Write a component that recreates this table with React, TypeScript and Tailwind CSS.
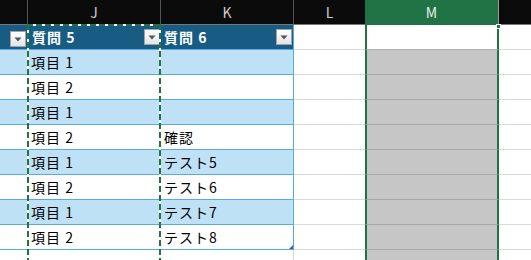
import React from 'react';

const GRID = 'grid grid-cols-[28px_133px_133px_71px_134px_1fr]';

interface Row {
  j: string;
  k: string;
}

const rows: Row[] = [
  { j: '項目 1', k: '' },
  { j: '項目 2', k: '' },
  { j: '項目 1', k: '' },
  { j: '項目 2', k: '確認' },
  { j: '項目 1', k: 'テスト5' },
  { j: '項目 2', k: 'テスト6' },
  { j: '項目 1', k: 'テスト7' },
  { j: '項目 2', k: 'テスト8' },
];

const FilterButton: React.FC = () => (
  <div className="flex h-4 w-4 shrink-0 items-center justify-center border border-[#a3a3a3] bg-gradient-to-b from-[#ffffff] to-[#e4e4e4]">
    <svg width="8" height="5" viewBox="0 0 8 5">
      <path d="M0.5 0.5 L7.5 0.5 L4 4.5 Z" fill="#555555" />
    </svg>
  </div>
);

const ColHeader: React.FC<{ label: string; className?: string }> = ({ label, className = '' }) => (
  <div
    className={`flex h-[25px] items-center justify-center border-b border-r border-b-[#767676] border-r-[#545454] bg-[#0b0b0b] text-[14px] text-[#cfcfcf] ${className}`}
  >
    {label}
  </div>
);

const App: React.FC = () => {
  return (
    <div className="relative h-[260px] w-[531px] overflow-hidden bg-white font-['Noto_Sans_CJK_JP','Noto_Sans',sans-serif] text-[14px] text-black">
      {/* column headers */}
      <div className={GRID}>
        <ColHeader label="" />
        <ColHeader label="J" />
        <ColHeader label="K" />
        <ColHeader label="L" className="border-r-0" />
        <div className="flex h-[25px] items-center justify-center border-r border-r-[#9a9a9a] bg-[#217346] text-[14px] text-[#e6efe9]">
          M
        </div>
        <div className="h-[25px] border-b border-b-[#767676] bg-[#0b0b0b]" />
      </div>

      {/* table header row */}
      <div className={`${GRID} h-[25px]`}>
        <div className="flex items-start border-b border-b-[#5aaade] bg-[#185c84] pl-[10px] pt-[6px]">
          <FilterButton />
        </div>
        <div className="flex items-center justify-between border-b border-b-[#5aaade] bg-[#185c84] pl-[4px] pr-[1px]">
          <span className="font-bold tracking-[1px] text-white">質問 5</span>
          <FilterButton />
        </div>
        <div className="flex items-center justify-between border-b border-r border-b-[#5aaade] border-r-[#5aaade] bg-[#185c84] pl-[3px] pr-[1px]">
          <span className="font-bold tracking-[1px] text-white">質問 6</span>
          <FilterButton />
        </div>
        <div className="border-b border-b-[#dadada]" />
        <div className="border-x-2 border-b border-x-[#217346] border-b-[#b0b0b0] bg-white" />
        <div className="border-b border-b-[#dadada]" />
      </div>

      {/* body rows */}
      {rows.map((row, i) => {
        const bg = i % 2 === 0 ? 'bg-[#bee1f5]' : 'bg-white';
        const last = i === rows.length - 1;
        return (
          <div key={i} className={`${GRID} h-[25px]`}>
            <div className={`border-b border-b-[#5aaade] ${bg}`} />
            <div className={`flex items-center border-b border-b-[#5aaade] pl-[3px] tracking-[1px] ${bg}`}>{row.j}</div>
            <div className={`relative flex items-center border-b border-r border-b-[#5aaade] border-r-[#5aaade] pl-[3px] tracking-[1px] ${bg}`}>
              {row.k}
              {last && (
                <svg className="absolute bottom-0 right-0" width="4" height="4" viewBox="0 0 4 4">
                  <path d="M4 0 L4 4 L0 4 Z" fill="#3d5fb3" />
                </svg>
              )}
            </div>
            <div className="border-b border-b-[#dadada]" />
            <div className="border-x-2 border-b border-x-[#217346] border-b-[#a9a9a9] bg-[#c6c6c6]" />
            <div className="border-b border-b-[#dadada]" />
          </div>
        );
      })}

      {/* row below the table */}
      <div className={`${GRID} h-[25px]`}>
        <div className="border-b border-b-[#dadada]" />
        <div className="border-b border-b-[#dadada]" />
        <div className="border-b border-r border-b-[#dadada] border-r-[#dadada]" />
        <div className="border-b border-b-[#dadada]" />
        <div className="border-x-2 border-b border-x-[#217346] border-b-[#a9a9a9] bg-[#c6c6c6]" />
        <div className="border-b border-b-[#dadada]" />
      </div>

      {/* copy marquee around column J */}
      <div className="pointer-events-none absolute left-[27px] top-[24px] h-[236px] w-[134px]">
        <div className="absolute left-0 top-0 h-[2px] w-full bg-[image:repeating-linear-gradient(to_right,#217346_0px,#217346_6px,#ffffff_6px,#ffffff_9px)]" />
        <div className="absolute left-0 top-0 h-full w-[2px] bg-[image:repeating-linear-gradient(to_bottom,#217346_0px,#217346_6px,#ffffff_6px,#ffffff_9px)]" />
        <div className="absolute right-0 top-0 h-full w-[2px] bg-[image:repeating-linear-gradient(to_bottom,#217346_0px,#217346_6px,#ffffff_6px,#ffffff_9px)]" />
      </div>

      {/* fill handle of the selected column */}
      <div className="absolute left-[496px] top-[24px] h-[5px] w-[5px] border border-white bg-[#217346]" />
    </div>
  );
};

export default App;
